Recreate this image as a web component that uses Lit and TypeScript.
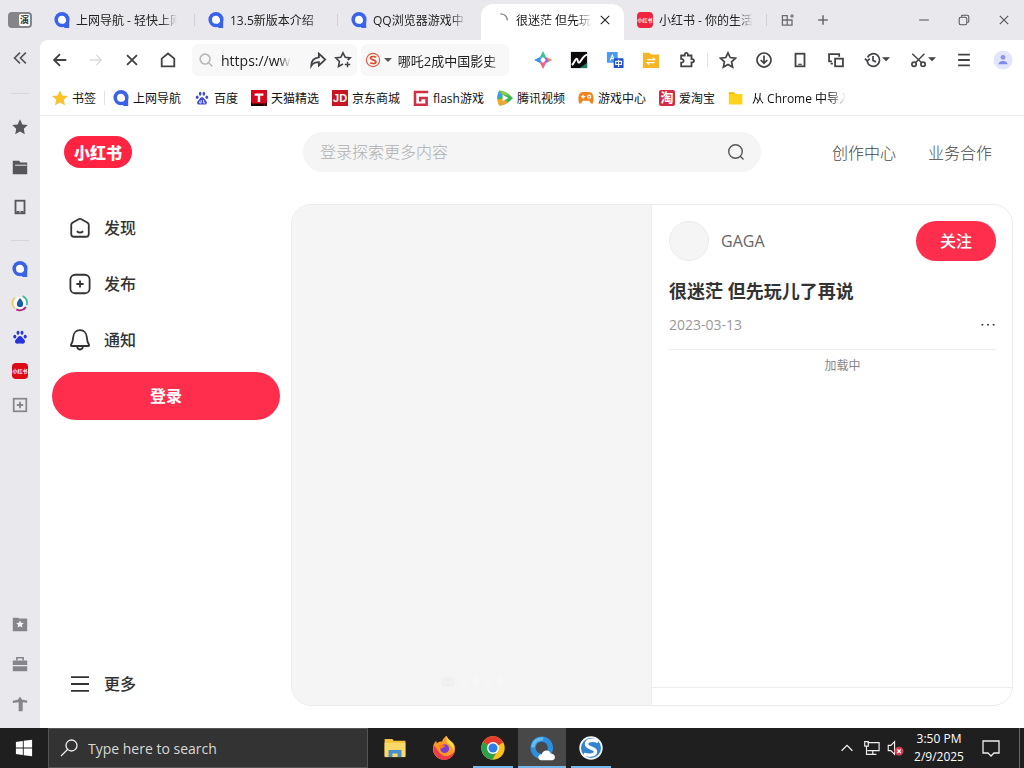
import { LitElement, html, svg, css, TemplateResult } from "lit";
import { customElement } from "lit/decorators.js";
import { classMap } from "lit/directives/class-map.js";

const art = (size: number, body: unknown) => html`<svg class="art" width=${size} height=${size} viewBox="0 0 20 20" fill="none" aria-hidden="true">${body}</svg>`;

const line = (d: string, w = 1.7, color = "currentColor") => svg`<path d=${d} stroke=${color} stroke-width=${w} />`;
const fill = (d: string, color = "currentColor") => svg`<path d=${d} fill=${color} />`;

const STAR = "M10 1.5l2.6 5.6 6 .7-4.4 4.2 1.1 6.1L10 15.100l-5.300 3 1.100-6.100L1.400 7.800l6-.700z";
const caret = svg`<path d="M20 7h9l-4.500 4.500z" fill="currentColor" />`;

const icons: Record<string, TemplateResult> = {
  collapse: art(18, line("M10 4l-6 6 6 6M16.500 4l-6 6 6 6", 1.9)),
  back: art(18, line("M17 10H4M10 3.500L3.500 10l6.500 6.500", 2.1)),
  forward: art(18, line("M3 10h13M10.500 4.500L16 10l-5.500 5.500", 1.5, "#dcdcde")),
  stop: art(18, line("M4.500 4.500l11 11M15.500 4.500l-11 11", 2.1)),
  home: art(18, line("M3 8.500L10 2.800l7 5.700V17H3z", 2)),
  lens: art(18, svg`<circle cx="9" cy="9" r="5.500" stroke="#b9b9b9" stroke-width="1.800" />${line("M13 13l4 4", 1.8, "#b9b9b9")}`),
  share: art(18, line("M11 3l7 6.500-7 6.500v-3.700C7 12.300 4.500 13 2.500 16.500c0-5.500 3-9 8.500-9.500z", 2)),
  starAdd: art(18, svg`${line("M15.300 10.200L18 7.700l-5.500-.700L10 2 7.500 7 2 7.700l4 3.900-1 5.600 5-2.700", 1.8)}${line("M15 12v6M12 15h6", 1.6)}`),
  sogou: art(16, svg`<circle cx="10" cy="10" r="8.300" stroke="#ea5a3c" stroke-width="1.400" /><path d="M13.800 6.700c-1.700-1.500-7-1.500-7 .900 0 2.600 6.800 1.900 6.800 4.800 0 2.500-5 2.500-7.200.800" stroke="#e0492d" stroke-width="2.100" />`),
  spark: art(18, svg`<path d="M10 0l3.300 6.700L10 10 6.700 6.700z" fill="#36c3a0"/><path d="M20 10l-6.700 3.300L10 10l3.300-3.300z" fill="#a35cf0"/><path d="M10 20l-3.300-6.700L10 10l3.300 3.300z" fill="#f0637e"/><path d="M0 10l6.700-3.300L10 10l-3.300 3.300z" fill="#3d8df5"/><path d="M13.300 6.700L20 10l-3.500 1.700z" fill="#f59a3e"/><path d="M10 6.800l3.200 3.200-3.200 3.200L6.800 10z" fill="#fff"/>`),
  black: art(18, svg`<rect x="1" y="1" width="18" height="18" fill="#0b0b0b"/><path d="M2 15.500c2.500-1 3.500-7 5.500-7 1.500 0 .5 4.500 2.500 4.500S13.500 5.500 19 4" stroke="#fff" stroke-width="2.200"/><path d="M11 19l8-6v6z" fill="#1d7b60"/>`),
  translate: art(18, svg`<rect x="1" y="1" width="12" height="12" rx="1" fill="#4a9bf0"/><path d="M4.500 10.500L7 4.500l2.500 6M5.500 8.500h3" stroke="#fff" stroke-width="1.200"/><rect x="8.500" y="8" width="11" height="11" rx="1" fill="#2152cf"/><path d="M10.800 11.500h6.400v3.500h-6.400zM14 9.800v8" stroke="#fff" stroke-width="1.200"/>`),
  folderSwap: art(18, svg`<path d="M1 2h7l2 2h9v15H1z" fill="#f5b524"/><path d="M6 9.500h8l-2-2M14 13H6l2 2" stroke="#fff" stroke-width="1.400"/>`),
  puzzle: art(18, line("M3.500 5h4c-.600-3.800 4.100-3.800 3.500 0H15v4c3.800-.500 3.800 4.200 0 3.700V17H3.500v-4c3.600.300 3.600-4.500 0-4.200z", 2)),
  star: art(18, line("M10 2l2.500 5.300 5.800.700-4.300 4 1.100 5.800-5.100-2.900-5.100 2.900L6 12 1.700 8l5.800-.700z", 1.9)),
  download: art(18, svg`<circle cx="10" cy="10" r="7.800" stroke="currentColor" stroke-width="1.900"/>${line("M10 5v8.500M6.300 10l3.700 3.700 3.700-3.700", 1.9)}`),
  phone: art(18, svg`<rect x="5" y="3" width="10" height="14" stroke="currentColor" stroke-width="2"/>${line("M8 14.800h4", 1.3)}`),
  windows: art(18, svg`${line("M5.500 11.500H2.300v-8h11.200v3", 2)}<rect x="9" y="8.500" width="8.700" height="8.500" stroke="currentColor" stroke-width="2"/>${line("M4 14h2.500", 2)}`),
  history: html`<svg class="art" width="27" height="18" viewBox="0 0 30 20" fill="none" aria-hidden="true"><path d="M4 7a7 7 0 1 1-.500 4.500M10 5.500v5l3.300 1.600M1 8.500l2.700 2.700 2.700-2.700" stroke="currentColor" stroke-width="1.900"/>${caret}</svg>`,
  cut: html`<svg class="art" width="27" height="18" viewBox="0 0 30 20" fill="none" aria-hidden="true"><path d="M2.500 3l10.500 10M16 3L6 13" stroke="currentColor" stroke-width="1.600"/><circle cx="4.500" cy="14.700" r="2.400" stroke="currentColor" stroke-width="1.900"/><circle cx="14.500" cy="14.700" r="2.400" stroke="currentColor" stroke-width="1.900"/>${caret}</svg>`,
  menu: art(18, line("M3.500 4h13M3.500 10h13M3.500 16h13", 2.1)),
  profile: art(20, svg`<circle cx="10" cy="10" r="9.500" fill="#e3e6fb"/><circle cx="10" cy="7.300" r="2.400" fill="#8a92ef"/><path d="M5.500 14.300c0-4.500 9-4.500 9 0z" fill="#7f88ee"/>`),
  qq: art(16, svg`<circle cx="10" cy="9.500" r="9.500" fill="#3a63ea"/><path d="M11 12h8v8h-6z" fill="#3a63ea"/><path d="M10 4.800a5 5 0 1 0 0 10h5v-4.500a5 5 0 0 0-5-5.500z" fill="#fff"/><path d="M12 15.200l4.500-4.500v4.500z" fill="#3a63ea"/>`),
  spinner: art(16, line("M8 2.500c5-.500 9 3 8.500 8", 1.3, "#666")),
  red: html`<span class="redbadge">小红书</span>`,
  bmStar: art(16, fill("M10 .5l2.900 6.300 6.900.7-5.200 4.700 1.600 6.900L10 15.600l-6.200 3.500 1.600-6.900L.2 7.500l6.900-.7z", "#fbc02a")),
  paw: art(16, svg`<g fill="#2932e1"><ellipse cx="3.500" cy="9.500" rx="1.900" ry="2.400"/><ellipse cx="7.500" cy="4.700" rx="1.800" ry="2.600"/><ellipse cx="12.500" cy="4.700" rx="1.800" ry="2.600"/><ellipse cx="16.500" cy="9.500" rx="1.900" ry="2.400"/><path d="M10 8.800c2.200 0 2.800 2.300 4.600 3.700 2.900 2.400 1.600 6-1.400 5.800-2-.300-4.400-.300-6.400 0-3 .200-4.300-3.400-1.400-5.800 1.800-1.400 2.400-3.700 4.600-3.700z"/></g>`),
  pawLine: art(16, svg`<g fill="#3e49d8"><ellipse cx="4" cy="9" rx="1.700" ry="2.200"/><ellipse cx="7.700" cy="4.700" rx="1.600" ry="2.400"/><ellipse cx="12.300" cy="4.700" rx="1.600" ry="2.400"/><ellipse cx="16" cy="9" rx="1.700" ry="2.200"/><path d="M10 9c2.500 0 3 2.500 4.700 4 2.600 2.400 1.300 5.500-1.500 5.200H6.800c-2.800.300-4.100-2.800-1.500-5.200C7.200 11.500 7.500 9 10 9z"/></g><path d="M9 12.500v3.700H7v-2M12 12.500v3.700h2" stroke="#fff" stroke-width="1.100"/>`),
  tmall: art(16, svg`<rect width="20" height="20" fill="#d8061b"/><path d="M0 15l5 5H0zM20 15l-5 5h5zM3 17h14v3H3z" fill="#1a0303"/><path d="M4.500 4.500h11v2.800h-4V15h-3V7.300h-4z" fill="#fff"/>`),
  jd: html`<span class="sq jd">JD</span>`,
  flash: art(16, svg`<path d="M1 2.500h18M2.500 2v16.500H17V10H9v4.500" stroke="#cf3044" stroke-width="3.200"/>`),
  video: art(16, svg`<path d="M3 .5C10 1 16.500 6 20 10c-3.500 4-10 9-17 9.500C0 15 0 5 3 .5z" fill="#3fb55c"/><path d="M3 .5C0 5 0 9 .5 12L7 6z" fill="#3f9fe0"/><path d="M3 .5C8 1 12.500 4 16 7L7 6z" fill="#8fce3a"/><path d="M.5 12c.3 3 1.200 5.500 2.500 7.500 4-.3 8-2 11-4.500L6 11z" fill="#f0a72d"/><path d="M7 6l7 4-7 4z" fill="#fff"/>`),
  game: art(16, svg`<path d="M1.500 17C-1 9 1.500 2.500 6 2.500h8c4.500 0 7 6.500 4.500 14.500-3 1-3.500-3-5-3.500h-7C5 14 4.500 18 1.500 17z" fill="#f0841f"/><path d="M6.500 5.800v5M4 8.300h5" stroke="#fff" stroke-width="1.700"/><circle cx="14" cy="8.300" r="1.900" stroke="#fff" stroke-width="1.500"/>`),
  tao: html`<span class="sq tao">淘</span>`,
  folder: art(16, svg`<path d="M1 3h7l2 2h8v13H1z" fill="#ffd21e"/><path d="M1 3h7v2H1z" fill="#f2bd00"/>`),
  rStar: art(18, fill(STAR)),
  rFolder: art(18, svg`${fill("M2 3h7l1.500 2H18v13H2z")}${line("M4.500 8h13", 1.1, "#e8e8ed")}`),
  rPhone: art(18, svg`<rect x="5" y="3" width="10" height="14" stroke="currentColor" stroke-width="2"/>${line("M6 15.500h8", 2.2)}${line("M9 15.500h2", 1, "#e8e8ed")}`),
  drop: art(18, svg`<path d="M4 16A8.200 8.200 0 0 1 4 4" stroke="#f3c557" stroke-width="1.500"/><path d="M13 2.300a8 8 0 0 1 4.500 10" stroke="#36b89a" stroke-width="2"/><path d="M16.500 14.500c-3 4-7.500 4.200-10.500 2.500" stroke="#b6207a" stroke-width="2.200"/><circle cx="10" cy="9.800" r="6.500" fill="#fff"/><path d="M10 4.500c2 2.500 3.500 4.500 3.500 6.500a3.500 3.500 0 0 1-7 0c0-2 1.500-4 3.500-6.500z" fill="#1a5f9e"/>`),
  rAdd: art(18, svg`<rect x="3" y="3" width="14" height="14" stroke="#85858b" stroke-width="1.900"/>${line("M10 6.500v7M6.500 10h7", 2, "#85858b")}`),
  rBox: art(18, svg`${fill("M2 3h6l1 1h9v14H2z", "#85858b")}${fill("M10 6l1.300 2.600 2.900.4-2.100 2 .5 2.900L10 12.500l-2.600 1.400.5-2.900-2.100-2 2.900-.4z", "#f1f1f4")}`),
  rCase: art(18, svg`${fill("M2 6h16v5H2zM2 12.500h16V18H2z", "#85858b")}${line("M6.500 6V3h7v3", 1.7, "#85858b")}`),
  rPin: art(18, fill("M10 2l2.500 3.200L18 6v2.500l-5-.5v10H8.500V8L2 9V6.500l5.500-1.300z", "#85858b")),
  grid: art(16, svg`${line("M3 4.500h6V10H3zM3 10h6v6.500H3zM9 10h6v6.500H9z", 1.600)}${line("M15 2.500v5M12.500 5h5", 1.4)}`),
  plus: art(16, line("M10 4v12M4 10h12", 2)),
  close: art(14, line("M4 4l12 12M16 4L4 16", 1.6)),
  min: art(16, line("M4 10h12", 1.3)),
  max: art(16, svg`<rect x="4" y="6.500" width="9.500" height="9.500" rx="2" stroke="currentColor" stroke-width="1.300"/>${line("M7 6V4.500C7 4 7.500 4 8 4h6c1.500 0 2 .500 2 2v5.500c0 1-.500 1.500-2 1.500", 1.3)}`),
  search: art(20, svg`<circle cx="9.500" cy="9.500" r="6.800" stroke="currentColor" stroke-width="1.400"/>${line("M14.500 14.500l3 3", 1.4)}`),
  discover: art(24, svg`<path d="M2.700 7.500c0-1 .300-1.400 1-1.900l5.100-2.900c.900-.500 1.500-.500 2.400 0l5.100 2.900c.700.500 1 .900 1 1.900V15c0 1.600-.700 2.300-2.300 2.300H5C3.400 17.300 2.700 16.600 2.700 15z" stroke="currentColor" stroke-width="1.500"/>${line("M7.300 12.700c1.600 1.300 3.800 1.300 5.400 0", 1.4)}`),
  publish: art(24, svg`<rect x="2" y="2.300" width="16" height="15.400" rx="4" stroke="currentColor" stroke-width="1.500"/>${line("M10 7v6M7 10h6", 1.5)}`),
  bell: art(24, svg`<path d="M10 1.800c3.500 0 5.500 2.700 5.700 6 .100 3.200.900 4.700 1.800 6.200.300.600 0 1-.600 1H3.100c-.600 0-.900-.400-.600-1 .900-1.500 1.700-3 1.800-6.200.200-3.300 2.200-6 5.700-6z" stroke="currentColor" stroke-width="1.500"/>${line("M7.700 15.500c0 3.200 4.600 3.200 4.600 0", 1.500)}`),
  more: art(24, line("M2.500 4.300h15M2.500 10h15M2.500 15.700h15", 1.6)),
  dots: art(16, svg`<g fill="currentColor"><circle cx="3" cy="11" r="1.300"/><circle cx="10" cy="11" r="1.300"/><circle cx="17" cy="11" r="1.300"/></g>`),
  win: art(18, fill("M1 3.300l7.700-1.100v7.300H1zM9.700 2L19 .800v8.700H9.700zM1 10.500h7.700v7.300L1 16.700zM9.700 10.500H19v8.700L9.700 18z", "#fff")),
  tbLens: art(20, svg`<circle cx="12.500" cy="7.500" r="5.500" stroke="#eee" stroke-width="1.300"/>${line("M8.500 11.500L2 18", 1.3, "#eee")}`),
  explorer: art(26, svg`<path d="M2 3h6l1 1.500h9V16H2z" fill="#f4c33e"/><path d="M2 6h16v11H2z" fill="#fbd968"/><path d="M5 17v-5.500h10V17h-3v-2.700H8V17z" fill="#4c8fcc"/>`),
  firefox: art(26, svg`<path d="M10 19a8.500 8.500 0 0 1-8.500-8.500C1.500 8 2.500 6 4 4.500L4.500 6.500C6 5 7 5 8.500 5 9 3 10.500 1.500 12 .5c.500 2 2 3 3.500 4.500C17.500 6 18.500 8 18.500 10.500A8.500 8.500 0 0 1 10 19z" fill="#ff9a26"/><path d="M12 .5c.500 2 2 3 3.500 4.500C17.500 7 18 9 17.500 12c-1.500-3-3-5-5.500-6z" fill="#ffe04a"/><path d="M2 8c-1 6 3 11 8 11 4.500 0 7-2.500 8-6-3 3-6 4-9 2.500S4.500 10 2 8z" fill="#f0384e"/><circle cx="10.500" cy="10.500" r="3.400" fill="#7a3fd0"/><path d="M6 8c2-1 3.500 0 5 .5-1.500 1-2 2-4 2z" fill="#ff7a22"/>`),
  chrome: art(26, svg`<circle cx="10" cy="10" r="9" fill="#fbc116"/><path d="M10 10L2.200 5.500a9 9 0 0 1 15.600 0z" fill="#e33b2e"/><path d="M2.200 5.500A9 9 0 0 0 9.500 19l4-7z" fill="#2da14c"/><path d="M10 5.500h7.800L10 10z" fill="#e33b2e"/><circle cx="10" cy="10" r="4.600" fill="#fff"/><circle cx="10" cy="10" r="3.500" fill="#2f7de8"/>`),
  qqBrowser: art(26, svg`<circle cx="9.800" cy="9.800" r="6.700" stroke="#2d8fe0" stroke-width="4"/><path d="M3 9.500a6.900 6.900 0 0 1 8-6.500" stroke="#63bdf2" stroke-width="2.500"/><path d="M9.500 19.500c-3.300-.3-3-4.700.3-4.700.7-3.700 6-4 6.900-.5 4.300.2 4 5.200 1 5.200z" fill="#fff"/>`),
  sogouBrowser: art(26, svg`<circle cx="10" cy="10" r="9" fill="#f3f7fb"/><circle cx="10" cy="10" r="7.700" fill="#3484cd"/><path d="M15.500 5C11 3 6.500 4.300 6.500 7c0 3.500 7 2.700 7 5.800 0 2.500-4.500 3.400-9 2" stroke="#fff" stroke-width="2.600"/>`),
  up: art(18, line("M4 13l6-6 6 6", 1.4, "#eee")),
  net: art(18, svg`${line("M6 4h13v9H6M12 13v4M8 17h8M3 3h4v5H3zM5 8v9h5", 1.3, "#eee")}`),
  sound: art(18, svg`${line("M2.500 7h3l4-4v14l-4-4h-3z", 1.3, "#eee")}<circle cx="14.500" cy="13.500" r="5" fill="#d9394c"/>${line("M12.500 11.500l4 4M16.500 11.500l-4 4", 1.4, "#fff")}`),
  notice: art(20, line("M2 3h16v12h-5l-3 3-3-3H2z", 1.3, "#eee")),
};

const tabs = [
  { icon: "qq", text: "上网导航 - 轻快上网", wide: true, sep: true },
  { icon: "qq", text: "13.5新版本介绍", sep: true },
  { icon: "qq", text: "QQ浏览器游戏中" },
  { icon: "spinner", text: "很迷茫 但先玩", active: true },
  { icon: "red", text: "小红书 - 你的生活", sep: true },
];

const bookmarks = [
  ["qq", "上网导航"], ["pawLine", "百度"], ["tmall", "天猫精选"], ["jd", "京东商城"],
  ["flash", "flash游戏"], ["video", "腾讯视频"], ["game", "游戏中心"], ["tao", "爱淘宝"],
];

const tool = (name: string, label: string, cls = "") =>
  html`<button class="tool ${cls}" aria-label=${label}>${icons[name]}</button>`;

@customElement("app-root")
export class AppRoot extends LitElement {
  static styles = css`
    :host { display: grid; grid-template-rows: minmax(0, 1fr) 40px; height: 100vh; overflow: hidden; background: #fff; color: #333;
      font-family: "Open Sans", "Noto Sans CJK SC", sans-serif; font-size: 12px; }
    * { box-sizing: border-box; }
    button, input { font: inherit; color: inherit; border: 0; padding: 0; margin: 0; background: none; outline: 0; }
    button { display: inline-flex; align-items: center; justify-content: center; }
    a { color: inherit; text-decoration: none; }
    h1, p { margin: 0; }
    .art { display: block; flex: none; }
    .shell { display: grid; grid-template-columns: 40px minmax(0, 1fr); min-height: 0; background: #e8e8ed; }
    .rail { display: flex; flex-direction: column; align-items: center; padding-bottom: 4px; color: #56565b; }
    .rail button { width: 40px; height: 40px; flex: none; }
    .rail .app { height: 34px; }
    .rail .fold { height: 36px; }
    .rail hr { width: 18px; height: 1px; border: 0; margin: 13px 0 11px; background: #d6d6dc; flex: none; }
    .rail .first { margin: 17px 0 13px; }
    .push { flex: 1; }
    .toggle { display: flex; justify-content: flex-end; width: 24px; height: 16px; padding: 2px; border-radius: 4px; background: #858589; }
    .toggle i { width: 11px; height: 12px; border-radius: 2px; background: #fff; font: 700 9px/12px "Noto Sans CJK SC", sans-serif; color: #333; text-align: center; }
    .browser { display: grid; grid-template-rows: 40px 40px 36px minmax(0, 1fr); min-width: 0; min-height: 0; }
    .tabs { display: flex; align-items: stretch; color: #222; min-width: 0; }
    .tab { position: relative; display: flex; flex: 0 1 143px; min-width: 0; align-items: center; justify-content: flex-start; gap: 6px; padding: 0 14px 0 13px; }
    .tab.wide { flex-basis: 155px; padding: 0 18px 0 14px; }
    .tab.sep::after { content: ""; position: absolute; right: 0; top: 14px; width: 1px; height: 12px; background: #cfcfd6; }
    .tab.active { margin-top: 4px; padding: 0 12px 4px 13px; background: #fff; border-radius: 12px 12px 0 0; }
    .fade { flex: 1; min-width: 0; overflow: hidden; white-space: nowrap; text-align: left; mask-image: linear-gradient(to right, #000 calc(100% - 16px), transparent); }
    .redbadge { display: grid; place-items: center; flex: none; width: 16px; height: 16px; border-radius: 4px; background: #f0243f; color: #fff; font: 700 5px/16px "Noto Sans CJK SC", sans-serif; }
    .rail .redbadge { background: #e00a17; }
    .sq { display: grid; place-items: center; width: 16px; height: 16px; flex: none; color: #fff; font: 700 11px/16px "Liberation Sans", "Noto Sans CJK SC", sans-serif; }
    .jd { background: #c81623; }
    .tao { background: #d22d45; border-radius: 2px; font-size: 13px; }
    .newtabs { display: flex; padding-left: 3px; color: #6b6b70; }
    .newtabs button { width: 35px; }
    .win { width: 40px; color: #55555a; }
    .bar { display: flex; align-items: center; padding-left: 2px; background: #fff; border-radius: 8px 0 0 0; color: #434347; min-width: 0; }
    .tool { width: 36px; height: 36px; flex: none; }
    .drop { width: 46px; }
    .last { width: 42px; }
    .fields { display: flex; flex: 1; gap: 4px; min-width: 0; padding: 0 16px 0 6px; }
    .field { display: flex; align-items: center; min-width: 0; height: 32px; border-radius: 6px; background: #f8f8f8; }
    .url { flex: 7; padding: 0 1px 0 5px; gap: 6px; font-size: 14px; }
    .find { flex: 6; padding: 0 8px 0 4px; gap: 3px; font-size: 13px; color: #111; }
    .field input { flex: 1; width: 0; min-width: 0; height: 24px; color: #222; mask-image: linear-gradient(to right, #000 calc(100% - 12px), transparent); }
    .acts { display: flex; margin-left: 9px; }
    .acts .tool { width: 25px; }
    .tri { border: 4px solid transparent; border-top-color: #555; border-bottom: 0; margin-right: 3px; }
    .vsep { width: 1px; height: 14px; margin: 0 2px; background: #e2e2e4; flex: none; }
    .marks { display: flex; align-items: center; gap: 13px; padding: 0 12px; background: #fff; border-bottom: 1px solid #e9e9ec; color: #111; white-space: nowrap; overflow: hidden; }
    .marks a { display: flex; align-items: center; gap: 4px; flex: none; }
    .marks .vsep { margin: 0 -5px 0 -5px; }
    .marks .imported { gap: 8px; width: 118px; }
    .page { display: grid; grid-template-rows: 88px minmax(0, 1fr); grid-template-columns: 251px minmax(0, 1fr); background: #fff; min-height: 0; font-size: 16px; }
    .head { grid-column: 1 / -1; display: grid; grid-template-columns: 1fr 458px 1fr; align-items: center; height: 72px; padding: 0 28px; }
    .logo { justify-self: start; margin-left: -4px; width: 68px; height: 32px; border-radius: 16px; background: #ff2442; color: #fff; font: 900 16px/32px "Noto Sans CJK SC", sans-serif; text-align: center; }
    .query { display: flex; align-items: center; height: 40px; padding: 0 15px 0 17px; border-radius: 20px; background: #f5f5f5; color: #555; }
    .query input { flex: 1; min-width: 0; height: 24px; }
    .query input::placeholder { color: #b0b0b0; opacity: 1; }
    .links { justify-self: end; display: flex; gap: 32px; margin-right: 4px; color: #444; white-space: nowrap; }
    .links, .query input { font-weight: 300; }
    .side { display: flex; flex-direction: column; gap: 8px; padding: 0 11px 20px 12px; }
    .side a { display: flex; align-items: center; gap: 12px; height: 48px; padding: 0 16px; font-weight: 500; color: #333; flex: none; }
    .side a span, .login span, .follow span { padding-bottom: 2px; }
    .login { height: 48px; flex: none; border-radius: 24px; background: #ff2e4d; color: #fff; font-weight: 600; }
    .note { display: grid; grid-template-columns: 1fr 1fr; margin: 0 11px 22px 0; border: 1px solid #ececec; border-radius: 20px; overflow: hidden; min-height: 0; }
    .media { display: flex; align-items: flex-end; justify-content: center; gap: 6px; padding-bottom: 18px; background: #f5f5f5; border-right: 1px solid #ececec; }
    .media i { width: 6px; height: 10px; border-radius: 5px; background: #f7f7f7; }
    .media i:first-child { width: 14px; background: #f0f0f0; }
    .detail { display: flex; flex-direction: column; min-width: 0; }
    .scroll { flex: 1; padding: 16px 16px 16px 17px; border-bottom: 1px solid #ececec; }
    .author { display: flex; align-items: center; gap: 12px; height: 40px; color: #666; }
    .avatar { width: 40px; height: 40px; border: 1px solid #ebebeb; border-radius: 50%; background: #f5f5f5; }
    .follow { margin-left: auto; width: 80px; height: 40px; border-radius: 20px; background: #ff2e4d; color: #fff; font-weight: 500; }
    h1 { margin-top: 16px; font-size: 18px; line-height: 28px; font-weight: 700; }
    .meta { display: flex; align-items: center; justify-content: space-between; height: 20px; margin-top: 9px; font-size: 14px; color: #999; }
    .meta button { color: #444; }
    .loading { margin-top: 15px; padding: 7px 0 0 20px; border-top: 1px solid #ececec; text-align: center; font-size: 12px; line-height: 18px; color: #888; }
    .foot { height: 17px; }
    .task { display: flex; align-items: stretch; background: #1f1f1f; color: #fff; min-width: 0; }
    .start { width: 48px; flex: none; }
    .tasksearch { display: flex; align-items: center; gap: 9px; flex: 0 1 320px; min-width: 0; padding: 0 10px; background: #333; border: 1px solid #555; font-size: 14px; }
    .tasksearch input { flex: 1; min-width: 0; }
    .tasksearch input::placeholder { color: #d8d8d8; opacity: 1; }
    .apps { display: flex; flex: 1; gap: 1px; padding-left: 3px; }
    .apps button { position: relative; width: 48px; flex: none; }
    .apps .running::after { content: ""; position: absolute; left: 4px; right: 4px; bottom: 0; height: 2px; background: #76b9ed; }
    .apps .current { background: #484848; }
    .apps .current::after { left: 0; right: 0; }
    .tray { width: 24px; flex: none; }
    .clock { width: 64px; flex: none; text-align: center; font-size: 12px; line-height: 18px; padding-top: 2px; white-space: nowrap; }
    .notice { width: 40px; margin-right: 8px; flex: none; }
    .desk { width: 5px; flex: none; border-left: 1px solid #666; }
  `;

  render() {
    return html`
      <div class="shell">
        <nav class="rail" aria-label="侧边栏">
          <button><span class="toggle"><i>演</i></span></button>
          <button class="fold">${icons.collapse}</button>
          <hr class="first" />
          <button>${icons.rStar}</button>
          <button>${icons.rFolder}</button>
          <button>${icons.rPhone}</button>
          <hr />
          ${["qq", "drop", "paw", "red", "rAdd"].map((n) => html`<button class="app">${icons[n]}</button>`)}
          <span class="push"></span>
          <button>${icons.rBox}</button>
          <button>${icons.rCase}</button>
          <button>${icons.rPin}</button>
        </nav>
        <div class="browser">
          <div class="tabs">
            ${tabs.map((t) => html`<button class=${classMap({ tab: true, wide: !!t.wide, sep: !!t.sep, active: !!t.active })}>
              ${icons[t.icon]}<span class="fade">${t.text}</span>${t.active ? icons.close : ""}
            </button>`)}
            <div class="newtabs">
              <button aria-label="标签组">${icons.grid}</button>
              <button aria-label="新标签页">${icons.plus}</button>
            </div>
            <span class="push"></span>
            <button class="win" aria-label="最小化">${icons.min}</button>
            <button class="win" aria-label="还原">${icons.max}</button>
            <button class="win" aria-label="关闭">${icons.close}</button>
          </div>
          <div class="bar">
            ${tool("back", "后退")}${tool("forward", "前进")}${tool("stop", "停止")}${tool("home", "主页")}
            <div class="fields">
              <div class="field url">${icons.lens}<input aria-label="地址" .value=${"https://www"} /><span class="acts">${tool("share", "分享")}${tool("starAdd", "收藏")}</span></div>
              <div class="field find">${icons.sogou}<span class="tri"></span><input aria-label="搜索" .value=${"哪吒2成中国影史"} /></div>
            </div>
            ${tool("spark", "助手")}${tool("black", "扩展")}${tool("translate", "翻译")}${tool("folderSwap", "文件")}${tool("puzzle", "扩展程序")}
            <span class="vsep"></span>
            ${tool("star", "书签")}${tool("download", "下载")}${tool("phone", "手机")}${tool("windows", "窗口")}
            ${tool("history", "历史", "drop")}${tool("cut", "截图", "drop")}${tool("menu", "菜单")}${tool("profile", "账号", "last")}
          </div>
          <nav class="marks" aria-label="书签栏">
            <a href="#">${icons.bmStar}<span>书签</span></a>
            <span class="vsep"></span>
            ${bookmarks.map(([n, t]) => html`<a href="#">${icons[n]}<span>${t}</span></a>`)}
            <a href="#" class="imported">${icons.folder}<span class="fade">从 Chrome 中导入</span></a>
          </nav>
          <div class="page">
            <header class="head">
              <a class="logo" href="#">小红书</a>
              <label class="query"><input aria-label="搜索" placeholder="登录探索更多内容" />${icons.search}</label>
              <nav class="links"><a href="#">创作中心</a><a href="#">业务合作</a></nav>
            </header>
            <nav class="side">
              <a href="#">${icons.discover}<span>发现</span></a>
              <a href="#">${icons.publish}<span>发布</span></a>
              <a href="#">${icons.bell}<span>通知</span></a>
              <button class="login"><span>登录</span></button>
              <span class="push"></span>
              <a href="#">${icons.more}<span>更多</span></a>
            </nav>
            <article class="note">
              <div class="media"><i></i><i></i><i></i><i></i><i></i></div>
              <div class="detail">
                <div class="scroll">
                  <div class="author"><span class="avatar"></span><span>GAGA</span><button class="follow"><span>关注</span></button></div>
                  <h1>很迷茫 但先玩儿了再说</h1>
                  <div class="meta"><time>2023-03-13</time><button aria-label="更多">${icons.dots}</button></div>
                  <p class="loading">加载中</p>
                </div>
                <div class="foot"></div>
              </div>
            </article>
          </div>
        </div>
      </div>
      <footer class="task">
        <button class="start" aria-label="Start">${icons.win}</button>
        <label class="tasksearch">${icons.tbLens}<input aria-label="Search" placeholder="Type here to search" /></label>
        <div class="apps">
          <button>${icons.explorer}</button>
          <button>${icons.firefox}</button>
          <button class="running">${icons.chrome}</button>
          <button class="running current">${icons.qqBrowser}</button>
          <button class="running">${icons.sogouBrowser}</button>
        </div>
        <button class="tray">${icons.up}</button>
        <button class="tray">${icons.net}</button>
        <button class="tray">${icons.sound}</button>
        <div class="clock">3:50 PM<br />2/9/2025</div>
        <button class="notice">${icons.notice}</button>
        <span class="desk"></span>
      </footer>
    `;
  }
}
